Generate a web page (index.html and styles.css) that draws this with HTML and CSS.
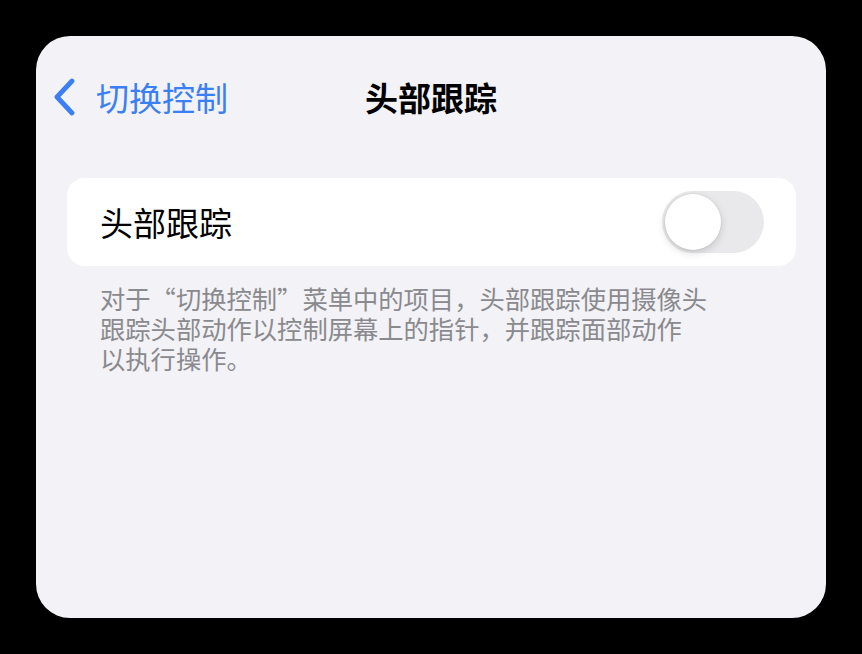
FILE: index.html
```html
<!DOCTYPE html>
<html lang="zh-CN">
<head>
<meta charset="utf-8">
<link rel="stylesheet" href="styles.css">
</head>
<body>
<div class="screen">
  <div class="nav">
    <div class="back">
      <svg class="chev" width="24" height="38" viewBox="0 0 24 38"><path d="M20 3 L5 19 L20 35" fill="none" stroke="#3A7FF4" stroke-width="4.8" stroke-linecap="round" stroke-linejoin="round"/></svg>
      <span class="back-label">切换控制</span>
    </div>
    <div class="title">头部跟踪</div>
    <div class="spacer"></div>
  </div>
  <div class="card">
    <span class="row-label">头部跟踪</span>
    <div class="toggle"><div class="knob"></div></div>
  </div>
  <p class="footer">对于“切换控制”菜单中的项目，头部跟踪使用摄像头<br>跟踪头部动作以控制屏幕上的指针，并跟踪面部动作<br>以执行操作。</p>
</div>
</body>
</html>
```
FILE: styles.css
```css
html, body { margin: 0; padding: 0; background: #000; }
body {
  width: 862px; height: 654px;
  padding: 36px; box-sizing: border-box;
  font-family: "Noto Sans CJK SC", "Noto Sans", sans-serif;
}
.screen {
  width: 790px; height: 582px;
  background: #F2F2F7;
  border-radius: 34px;
  overflow: hidden;
}
.nav {
  display: grid;
  grid-template-columns: 1fr auto 1fr;
  align-items: center;
  height: 50px;
  padding-top: 36px;
}
.back {
  display: flex; align-items: center;
  padding-left: 16px;
  gap: 20px;
}
.chev { display: block; }
.back-label {
  color: #3A7FF4;
  font-size: 33px; line-height: 40px;
}
.title {
  font-size: 33px; line-height: 40px; font-weight: 700; color: #000;
}
.card {
  margin: 56px 30px 0 31px;
  height: 88px;
  background: #fff;
  border-radius: 18px;
  display: flex; align-items: center; justify-content: space-between;
  padding: 0 32px 0 33px;
}
.row-label { font-size: 33px; line-height: 40px; color: #000; }
.toggle {
  width: 102px; height: 62px; border-radius: 31px;
  background: #E9E9EB;
  display: flex; align-items: center;
  padding-left: 3px; box-sizing: border-box;
}
.knob {
  width: 56px; height: 56px; border-radius: 50%;
  background: #fff;
  box-shadow: 0 3px 8px rgba(0,0,0,0.15), 0 0 0 1px rgba(0,0,0,0.04);
}
.footer {
  margin: 17px 0 0 64px;
  font-size: 25.3px; line-height: 30px;
  color: #8A8A8E;
}
```
